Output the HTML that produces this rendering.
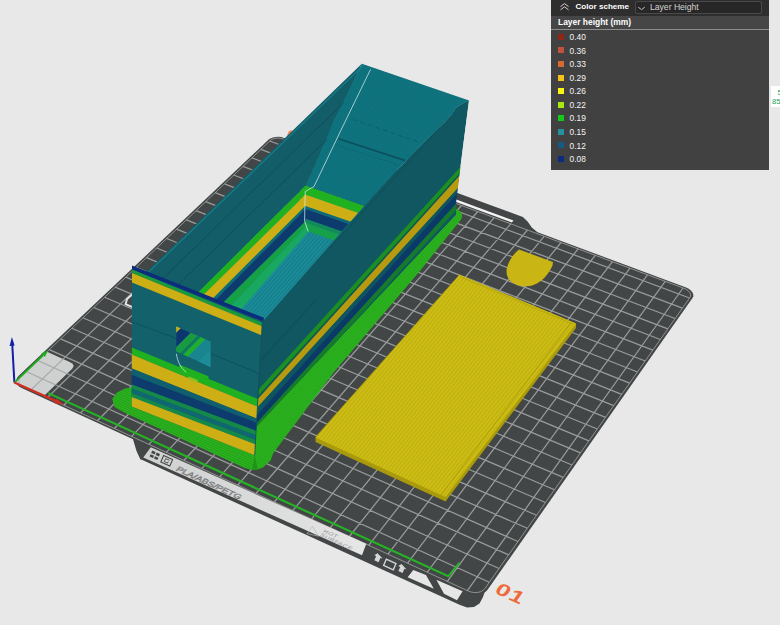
<!DOCTYPE html>
<html><head><meta charset="utf-8"><title>Layer Height Preview</title>
<style>
html,body{margin:0;padding:0;background:#e8e8e8;}
body{width:780px;height:625px;position:relative;overflow:hidden;font-family:"Liberation Sans",sans-serif;}

#pn{position:absolute;left:551px;top:0;width:218px;height:169.5px;background:#414141;color:#fff;font-family:"Liberation Sans",sans-serif;}
#pn .hd{position:absolute;left:0;top:0;width:218px;height:15.5px;background:#2e2e2e;}
#pn .t1{position:absolute;left:24.5px;top:1px;font-size:8.1px;font-weight:bold;line-height:11px;white-space:nowrap;}
#pn .dd{position:absolute;left:84px;top:1.3px;width:126.5px;height:12.6px;background:#272727;border:0.6px solid #4a4a4a;border-radius:2px;box-sizing:border-box;}
#pn .dt{position:absolute;left:99px;top:2.4px;font-size:8.6px;line-height:11px;color:#d4d4d4;white-space:nowrap;}
#pn .sub{position:absolute;left:0;top:15.5px;width:218px;height:14px;background:#464646;}
#pn .t2{position:absolute;left:7px;top:17.2px;font-size:8.45px;font-weight:bold;line-height:11px;white-space:nowrap;}
#pn .sep{position:absolute;left:0;top:29.3px;width:218px;height:1.2px;background:#8c8c8c;}
#pn .sw{position:absolute;left:7px;width:6px;height:6px;}
#pn .lb{position:absolute;left:18.5px;font-size:8.4px;line-height:11px;color:#f4f4f4;white-space:nowrap;}
#sd{position:absolute;left:771px;top:86px;width:9px;height:21px;background:#fff;overflow:hidden;}
#sd span{position:absolute;font-size:7.5px;line-height:9px;color:#1a9f5a;white-space:nowrap;font-family:"Liberation Sans",sans-serif;}
</style></head><body>
<svg width="780" height="625" viewBox="0 0 780 625" style="position:absolute;left:0;top:0">
<rect width="780" height="625" fill="#e8e8e8"/>
<polygon points="366.2,170.0 376.9,163.4 522.9,217.1 527.8,221.7 531.8,227.4 536.9,231.7 531.1,238.8 361.2,175.2" fill="#434646"/>
<polygon points="128,434 133,439.2 136.5,451 140.3,459.2 143.5,460.6 459.5,604.8 467,607.4 474,607 479.5,603.5 483,597 486,588 300,480" fill="#434646"/>
<polygon points="692.5,298.1 693.3,296.3 693.2,294.2 692.3,292.2 690.6,290.3 688.2,288.6 685.4,287.2 284.0,137.9 281.3,137.1 278.4,136.8 275.5,136.9 272.8,137.4 270.5,138.4 268.7,139.6 18.7,375.8 17.1,377.8 16.3,380.1 16.4,382.3 17.3,384.5 19.1,386.4 21.6,387.9 467.8,593.0 471.4,594.3 475.2,594.8 479.0,594.6 482.4,593.7 485.3,592.1 487.4,590.0" fill="#434646"/>
<polygon points="14.4,382.6 43.9,396.1 72.2,368.7 73.7,366.1 72.6,363.7 69.7,361.9 47.0,351.8" fill="#cfd0d0"/>
<path d="M30.7,390.1L289.9,141.6M47.2,397.7L305.0,147.2M63.8,405.3L320.1,152.8M80.5,413.0L335.4,158.5M97.4,420.7L350.7,164.2M114.4,428.5L366.2,170.0M131.6,436.4L381.8,175.8M148.9,444.4L397.5,181.6M166.3,452.4L413.3,187.5M183.9,460.5L429.3,193.5M201.7,468.6L445.3,199.4M219.6,476.8L461.5,205.5M237.7,485.1L477.8,211.5M255.9,493.5L494.2,217.6M274.3,502.0L510.7,223.8M292.8,510.5L527.4,230.0M311.5,519.1L544.1,236.3M330.4,527.7L561.0,242.5M349.4,536.5L578.1,248.9M368.7,545.3L595.2,255.3M388.0,554.2L612.5,261.7M407.6,563.2L630.0,268.2M427.3,572.2L647.5,274.8M447.3,581.4L665.2,281.3M467.4,590.6L683.0,288.0M26.2,371.5L489.3,582.2M37.8,360.5L499.0,568.5M49.3,349.6L508.6,554.9M60.6,338.9L518.0,541.5M71.8,328.3L527.3,528.3M82.9,317.8L536.5,515.3M93.8,307.5L545.5,502.5M104.6,297.3L554.5,489.8M115.2,287.2L563.3,477.3M125.8,277.2L572.0,465.0M136.2,267.4L580.5,452.8M146.5,257.6L589.0,440.8M156.6,248.0L597.3,429.0M166.7,238.5L605.6,417.3M176.6,229.1L613.7,405.7M186.4,219.9L621.7,394.3M196.1,210.7L629.6,383.1M205.6,201.6L637.5,372.0M215.1,192.7L645.2,361.0M224.5,183.8L652.8,350.2M233.7,175.0L660.3,339.5M242.9,166.4L667.8,328.9M251.9,157.8L675.1,318.5M260.9,149.4L682.4,308.2M269.7,141.0L689.5,298.0" stroke="#a2a4a4" stroke-width="1.25" fill="none" opacity="0.9"/>
<polygon points="689.9,297.5 690.6,296.0 690.5,294.3 689.8,292.5 688.3,290.9 686.3,289.5 683.9,288.3 283.2,139.1 280.9,138.4 278.5,138.1 276.0,138.2 273.7,138.7 271.7,139.5 270.2,140.6 20.9,376.5 19.5,378.2 18.9,380.1 18.9,382.0 19.7,383.8 21.3,385.4 23.4,386.7 468.4,591.1 471.4,592.1 474.7,592.6 477.8,592.4 480.7,591.7 483.1,590.3 484.9,588.5" fill="none" stroke="#a2a4a4" stroke-width="0.9" opacity="0.9"/>
<polygon points="430.2,192.4 431.9,190.6 513.5,220.5 511.8,222.5" fill="#f4f4f4"/>
<linearGradient id="bandg" x1="150" y1="0" x2="366" y2="0" gradientUnits="userSpaceOnUse"><stop offset="0" stop-color="#cfd0d0"/><stop offset="1" stop-color="#e6e6e6"/></linearGradient>
<polygon points="150.8,447.2 366.3,543.8 362,555.2 143.3,457.5" fill="url(#bandg)"/>
<path d="M48.2,393.1L448.3,576.3L459.5,562.7" stroke="#25b325" stroke-width="2.1" fill="none"/>
<path d="M132.5,294.3L127,299L125.6,304.2L132.5,307.2" stroke="#e2e2e2" stroke-width="2" fill="none"/>
<polygon points="287,135.5 288.5,131.5 291.5,130 293,132 290,136.5" fill="#f08a5a"/>
<polygon points="459.5,274.8 576.0,323.5 576.0,328.0 445.5,501.5 315.5,441.9 315.5,437.4" fill="#a89a0c"/>
<defs><pattern id="yl" width="3" height="3" patternUnits="userSpaceOnUse" patternTransform="rotate(-50.5)"><rect width="3" height="1.3" fill="#9c8e08" opacity="0.32"/></pattern></defs>
<polygon points="459.5,274.8 576.0,323.5 445.5,497.0 315.5,437.4" fill="#cfbf14"/>
<polygon points="459.5,274.8 576.0,323.5 445.5,497.0 315.5,437.4" fill="url(#yl)"/>
<path d="M456.0,278.8L316.5,435.9" stroke="#a4960a" stroke-width="0.9" opacity="0.8"/>
<path d="M571.0,323.0L441.0,495.0" stroke="#a4960a" stroke-width="0.9" opacity="0.8"/>
<path d="M460.5,277.0L573.0,324.1" stroke="#a4960a" stroke-width="0.8" opacity="0.6"/>
<path d="M519,249.5L553,262L552.5,265.5C548,275 540,286.5 524,286.5C512,285 506,279 506.5,270C508,262 513,254 519,249.5Z" fill="#c9b614"/>
<defs><pattern id="mesh" width="2.6" height="2.6" patternUnits="userSpaceOnUse" patternTransform="rotate(18)"><path d="M0,0L2.6,2.6M2.6,0L0,2.6" stroke="#0a5863" stroke-width="0.45" opacity="0.55"/></pattern><pattern id="brf" width="2.2" height="2.2" patternUnits="userSpaceOnUse" patternTransform="rotate(24.6)"><rect width="2.2" height="0.9" fill="#1a8612" opacity="0.45"/></pattern><pattern id="brr" width="2.2" height="2.2" patternUnits="userSpaceOnUse" patternTransform="rotate(-49.6)"><rect width="2.2" height="0.9" fill="#1a8612" opacity="0.35"/></pattern></defs>
<polygon points="132.0,387.5 125.0,388.5 117.0,392.5 112.3,399.0 114.5,407.0 124.4,412.6 243.7,467.4 250.0,469.6 256.0,470.0 263.0,467.5 270.5,460.5 273.3,453.0 335.0,370.8 420.0,270.8 461.0,219.5 462.3,215.5 461.0,212.0 456.5,209.0 450.0,205.0 250.0,410.0" fill="#2bb41f"/>
<polygon points="132,387.5 125,388.5 117,392.5 112.3,399 114.5,407 124.4,412.6 243.7,467.4 250,469.6 256,470 256,440 132,390" fill="url(#brf)"/>
<polygon points="256,470 263,467.5 270.5,460.5 273.3,453 335,370.8 420,270.8 461,219.5 462.3,215.5 461,212 456.5,209 450,205 256,415" fill="url(#brr)"/>
<polygon points="254.7,455.3 252,470 258,470.3" fill="#1c8a14" opacity="0.7"/>
<polygon points="132.0,285.7 361.8,63.8 305.6,185.4 197.0,293.5" fill="#125d68"/>
<polygon points="469.0,100.5 262.4,320.0 263.5,320.8 364.6,205.9 390.0,178.0 413.2,153.2 432.0,134.5 445.0,122.0 452.0,114.0 456.0,108.0 462.0,104.0 467.0,101.5" fill="#105761"/>
<polygon points="361.8,63.8 469.0,100.5 467.0,101.5 462.0,104.0 456.0,108.0 452.0,114.0 445.0,122.0 432.0,134.5 413.2,153.2 390.0,178.0 364.6,205.9 305.6,185.4 318.0,158.0 334.0,120.0 350.0,88.0" fill="#0f7782"/>
<polygon points="361.8,63.8 469.0,100.5 467.0,101.5 462.0,104.0 456.0,108.0 452.0,114.0 445.0,122.0 432.0,134.5 413.2,153.2 390.0,178.0 364.6,205.9 305.6,185.4 318.0,158.0 334.0,120.0 350.0,88.0" fill="url(#mesh)"/>
<path d="M352.6,119.5L420.5,142.6" stroke="#0c5f6b" stroke-width="1" stroke-dasharray="5,3" fill="none"/>
<path d="M338.5,138.7L405,160.5" stroke="#0a4f5c" stroke-width="1.6" fill="none"/>
<path d="M336,145L401,165.6" stroke="#0c6773" stroke-width="0.8" fill="none"/>
<path d="M152.8,288.2L343.8,102.7" stroke="#0c4a54" stroke-width="0.8" fill="none"/>
<path d="M172.3,290.5L327.0,139.2" stroke="#0c4a54" stroke-width="0.8" fill="none"/>
<path d="M134.5,285.7L363.3,65.3" stroke="#1b7f8d" stroke-width="1.1" fill="none"/>
<clipPath id="pit"><polygon points="305.6,185.4 364.6,205.9 263.5,320.8 197.0,293.5"/></clipPath>
<g clip-path="url(#pit)">
<polygon points="305.6,185.4 364.6,205.9 263.5,320.8 197.0,293.5" fill="#1b8b97"/>
<polygon points="300.0,183.5 372.0,208.4 372.0,217.6 300.0,192.7" fill="#1fb11f"/>
<polygon points="300.0,192.7 372.0,217.6 372.0,229.2 300.0,204.3" fill="#cdae14"/>
<polygon points="300.0,204.3 372.0,229.2 372.0,232.0 300.0,207.1" fill="#0f6a74"/>
<polygon points="300.0,207.1 372.0,232.0 372.0,242.0 300.0,217.1" fill="#0d3b6e"/>
<polygon points="300.0,217.1 372.0,242.0 372.0,246.0 300.0,221.1" fill="#128a5a"/>
<polygon points="300.0,221.1 372.0,246.0 372.0,254.5 300.0,229.6" fill="#17a04a"/>
<polygon points="308.2,231.5 380.0,256.4 300.0,330.0 240.0,310.5" fill="#1b8b97"/>
<path d="M311.3,232.6L242.7,311.7" stroke="#0f6f7c" stroke-width="0.6" fill="none"/>
<path d="M314.4,233.6L245.3,312.8" stroke="#0f6f7c" stroke-width="0.6" fill="none"/>
<path d="M317.5,234.7L248.0,314.0" stroke="#0f6f7c" stroke-width="0.6" fill="none"/>
<path d="M320.6,235.7L250.7,315.2" stroke="#0f6f7c" stroke-width="0.6" fill="none"/>
<path d="M323.6,236.8L253.3,316.3" stroke="#0f6f7c" stroke-width="0.6" fill="none"/>
<path d="M326.7,237.8L256.0,317.5" stroke="#0f6f7c" stroke-width="0.6" fill="none"/>
<path d="M329.8,238.9L258.7,318.7" stroke="#0f6f7c" stroke-width="0.6" fill="none"/>
<path d="M332.9,239.9L261.3,319.8" stroke="#0f6f7c" stroke-width="0.6" fill="none"/>
<polygon points="305.6,185.4 188.3,300.5 196.3,302.0 305.6,194.4" fill="#1fb11f"/>
<polygon points="305.6,194.4 196.3,302.0 205.9,305.4 305.4,206.0" fill="#cdae14"/>
<polygon points="305.4,206.0 205.9,305.4 208.9,306.4 305.2,209.5" fill="#0f6a74"/>
<polygon points="305.2,209.5 208.9,306.4 216.9,309.0 305.6,221.3" fill="#0d3b6e"/>
<polygon points="305.6,221.3 216.9,309.0 225.0,312.2 306.5,226.0" fill="#15a045"/>
<polygon points="306.5,226.0 225.0,312.2 234.5,316.8 308.2,231.5" fill="#19a860"/>
</g>
<path d="M364.6,205.9L263.5,320.8" stroke="#1a7a86" stroke-width="0.8" fill="none"/>
<clipPath id="rw"><polygon points="262.4,320.0 263.5,320.8 364.6,205.9 390.0,178.0 413.2,153.2 432.0,134.5 445.0,122.0 452.0,114.0 456.0,108.0 462.0,104.0 467.0,101.5 469.0,100.5 462.6,150.0 459.8,172.0 456.2,201.3 456.3,214.5 256.0,427.3"/></clipPath>
<g clip-path="url(#rw)">
<polygon points="262.4,320.0 263.5,320.8 364.6,205.9 390.0,178.0 413.2,153.2 432.0,134.5 445.0,122.0 452.0,114.0 456.0,108.0 462.0,104.0 467.0,101.5 469.0,100.5 462.6,150.0 459.8,172.0 456.2,201.3 456.3,214.5 256.0,427.3" fill="#105761"/>
<polygon points="185.5,470.0 475.8,150.0 481.1,150.0 191.2,470.0" fill="#1c8f22"/>
<polygon points="191.2,470.0 481.1,150.0 482.9,150.0 193.5,470.0" fill="#0e5a50"/>
<polygon points="193.5,470.0 482.9,150.0 492.7,150.0 200.2,470.0" fill="#b89a10"/>
<polygon points="200.2,470.0 492.7,150.0 496.3,150.0 207.5,470.0" fill="#0e5560"/>
<polygon points="207.5,470.0 496.3,150.0 505.0,150.0 214.0,470.0" fill="#0c3a68"/>
<polygon points="214.0,470.0 505.0,150.0 511.1,150.0 218.8,470.0" fill="#167a2c"/>
<path d="M316,300L262,359" stroke="#0c4852" stroke-width="0.8" fill="none"/>
<path d="M440,128L330,248" stroke="#0c4852" stroke-width="0.7" fill="none" opacity="0.7"/>
</g>
<polygon points="132.0,266.7 262.4,320.0 254.7,455.3 131.7,406.5" fill="#13616b"/>
<polygon points="132.0,265.5 263.9,317.8 263.4,321.6 132.0,269.5" fill="#0c2c7c"/>
<polygon points="132.0,269.5 262.2,322.7 262.0,326.2 132.0,273.1" fill="#1a9a3a"/>
<polygon points="132.0,273.1 262.0,326.2 261.5,335.2 132.0,282.4" fill="#cdae14"/>
<polygon points="131.8,347.4 257.9,399.0 257.5,406.5 131.8,354.6" fill="#1fb11f"/>
<polygon points="131.8,354.6 257.5,406.5 256.8,418.6 131.8,368.6" fill="#cdae14"/>
<polygon points="131.8,368.6 256.8,418.6 256.5,422.8 131.8,374.9" fill="#0f5f6e"/>
<polygon points="131.8,374.9 256.5,422.8 256.1,430.9 131.7,384.6" fill="#0d3b6e"/>
<polygon points="131.7,384.6 256.1,430.9 255.8,435.3 131.7,388.6" fill="#158a48"/>
<polygon points="131.7,388.6 255.8,435.3 255.6,440.1 131.7,393.2" fill="#0f6870"/>
<polygon points="131.7,393.2 255.6,440.1 255.3,444.3 131.7,396.9" fill="#158a48"/>
<polygon points="131.7,396.9 255.3,444.3 254.7,455.3 131.7,406.5" fill="#cdae14"/>
<clipPath id="win"><polygon points="176.2,326.2 210.8,341.5 210.8,367.7 197.7,361.5 176.2,351.5"/></clipPath>
<g clip-path="url(#win)">
<polygon points="176.2,326.2 210.8,341.5 210.8,367.7 197.7,361.5 176.2,351.5" fill="#1c8c96"/>
<polygon points="176.2,326.2 180.8,328.2 120.8,388.2 116.2,386.2" fill="#cdae14"/>
<polygon points="180.8,328.2 190.8,332.7 130.8,392.7 120.8,388.2" fill="#0d3570"/>
<polygon points="190.8,332.7 197.7,335.7 137.7,395.7 130.8,392.7" fill="#1a9a40"/>
<polygon points="197.7,335.7 200.8,337.1 140.8,397.1 137.7,395.7" fill="#0f7a5a"/>
<polygon points="200.8,337.1 205.4,339.1 145.4,399.1 140.8,397.1" fill="#1fae30"/>
<path d="M206.5,339.6l-40,40" stroke="#0f6a76" stroke-width="0.5"/>
<path d="M208.3,340.4l-40,40" stroke="#0f6a76" stroke-width="0.5"/>
<path d="M210.1,341.2l-40,40" stroke="#0f6a76" stroke-width="0.5"/>
<path d="M211.9,342.0l-40,40" stroke="#0f6a76" stroke-width="0.5"/>
<path d="M213.7,342.8l-40,40" stroke="#0f6a76" stroke-width="0.5"/>
<path d="M215.5,343.6l-40,40" stroke="#0f6a76" stroke-width="0.5"/>
</g>
<polygon points="176.2,351.5 197.7,361.5 210.8,367.7 210.8,379.5 176.2,365.6" fill="#13616b"/>
<polygon points="179.2,364.6 208.5,376.2 208.5,379.5 179.2,367.6" fill="#1fb11f"/>
<polygon points="188.5,376.2 197.7,380.0 197.7,383.0 188.5,379.2" fill="#8fbf20"/>
<path d="M132,321.8L176.4,338.5" stroke="#0d4c57" stroke-width="0.8" fill="none"/>
<path d="M210.8,353.8L255,371.5Q258,373 257.5,375" stroke="#0d4c57" stroke-width="0.8" fill="none"/>
<path d="M262.4,320.0L254.7,455.3" stroke="#0d4f59" stroke-width="0.8" fill="none"/>
<path d="M370.5,69.5L342,128L314,186.5L305.2,191.5L304.6,221L308.2,231.5" stroke="#d8f0f0" stroke-width="0.8" fill="none" opacity="0.9"/>
<path d="M176.4,353.8C177.5,362 181,368 186.2,372.3" stroke="#d8f0f0" stroke-width="0.8" fill="none" opacity="0.9"/>
<g stroke-linecap="butt">
<path d="M14.4,382.6L12.3,345" stroke="#1420a8" stroke-width="2"/>
<polygon points="9.6,346 14.6,345.6 11.9,337" fill="#1420a8"/>
<path d="M14.4,382.6L43,355.3" stroke="#1fae1f" stroke-width="1.9"/>
<polygon points="41.3,353.2 44.8,357 48.2,350.4" fill="#1fae1f"/>
<path d="M14.4,382.6L56,401" stroke="#d42a20" stroke-width="2.2"/>
<polygon points="56.5,398.6 54.6,403.2 63.6,404.8" fill="#d42a20"/>
</g>
<text transform="matrix(2.0329,0.9289,-0.9296,1.3304,493.45,592.39)" font-family="Liberation Sans, sans-serif" font-weight="bold" font-size="11.2" fill="#ee6a3a" letter-spacing="0.6">01</text>
<g fill="#434646">
<polygon points="152.2,450.6 155.6,452.1 154.6,454.5 151.2,453"/><polygon points="156.6,452.6 160,454.1 159,456.5 155.6,455"/>
<polygon points="150.6,454.2 154,455.7 153,458.1 149.6,456.6"/><polygon points="155,456.2 158.4,457.7 157.4,460.1 154,458.6"/>
</g>
<polygon points="163.6,455.6 172.6,459.6 169.8,466 160.8,462" fill="none" stroke="#434646" stroke-width="1.1"/>
<path d="M169.5,460.2L165.6,458.6L164.3,461.6L167.6,463.1L168.2,461.6" fill="none" stroke="#434646" stroke-width="0.9"/>
<text transform="matrix(1.7742,0.8207,-1.1340,1.2344,175.21,470.25)" font-family="Liberation Sans, sans-serif" font-size="4.6" fill="none" stroke="#77797a" stroke-width="0.3" textLength="36" lengthAdjust="spacingAndGlyphs">PLA/ABS/PETG</text>
<polygon points="312.5,526.5 318.6,536.2 307,533.6" fill="none" stroke="#b4b6b6" stroke-width="0.7"/>
<text transform="matrix(1.8968,0.8746,-1.0682,1.3170,322.61,531.90)" font-family="Liberation Sans, sans-serif" font-size="3.1" fill="#8f9191" letter-spacing="0.3">HOT</text>
<text transform="matrix(1.8994,0.8782,-1.0727,1.3225,319.39,535.86)" font-family="Liberation Sans, sans-serif" font-size="3.1" fill="#8f9191" letter-spacing="0.3">SURFACE</text>
<g fill="#d6d7d7">
<polygon points="377.5,553.2 382.6,558.6 380.4,557.9 378.6,562.2 374.4,560.3 376.2,556.1 374.2,555.2"/>
<polygon points="401.5,564 406.6,569.4 404.4,568.7 402.6,573 398.4,571.1 400.2,566.9 398.2,566"/>
</g>
<polygon points="386.3,559.2 396,563.6 393.3,569.8 383.6,565.4" fill="none" stroke="#d6d7d7" stroke-width="1.3"/>
<polygon points="413.3,570 426,575.1 433.8,588.7 407.7,577.2" fill="#e6e6e6"/>
<polygon points="436.4,579.7 462.6,591.3 457,600.3 444,593.8" fill="#e6e6e6"/>
</svg>
<div id="pn"><div class="hd"></div>
<svg width="12" height="10" viewBox="0 0 12 10" style="position:absolute;left:7.5px;top:1.6px"><path d="M1.5,4.6L5.5,1.6L9.5,4.6M1.5,7.8L5.5,4.8L9.5,7.8" stroke="#cfcfcf" stroke-width="1" fill="none"/></svg>
<div class="t1">Color scheme</div><div class="dd"></div>
<svg width="10" height="8" viewBox="0 0 10 8" style="position:absolute;left:85.5px;top:4.8px"><path d="M1.2,2.2L4.5,4.6L7.8,2.2" stroke="#cfcfcf" stroke-width="0.9" fill="none"/></svg>
<div class="dt">Layer Height</div>
<div class="sub"></div><div class="t2">Layer height (mm)</div><div class="sep"></div>
<div class="sw" style="top:33.9px;background:#8f2616"></div><div class="lb" style="top:32.2px">0.40</div>
<div class="sw" style="top:47.4px;background:#c2523c"></div><div class="lb" style="top:45.7px">0.36</div>
<div class="sw" style="top:61.0px;background:#d66a30"></div><div class="lb" style="top:59.3px">0.33</div>
<div class="sw" style="top:74.5px;background:#f2c417"></div><div class="lb" style="top:72.8px">0.29</div>
<div class="sw" style="top:88.1px;background:#f8f413"></div><div class="lb" style="top:86.4px">0.26</div>
<div class="sw" style="top:101.6px;background:#a6ea10"></div><div class="lb" style="top:99.9px">0.22</div>
<div class="sw" style="top:115.1px;background:#14c71b"></div><div class="lb" style="top:113.4px">0.19</div>
<div class="sw" style="top:128.7px;background:#2490a0"></div><div class="lb" style="top:127.0px">0.15</div>
<div class="sw" style="top:142.2px;background:#135a85"></div><div class="lb" style="top:140.5px">0.12</div>
<div class="sw" style="top:155.8px;background:#0b2c7a"></div><div class="lb" style="top:154.1px">0.08</div>
</div>
<div id="sd"><span style="left:6.5px;top:2px">5</span><span style="left:1px;top:11px">85</span></div>
</body></html>
